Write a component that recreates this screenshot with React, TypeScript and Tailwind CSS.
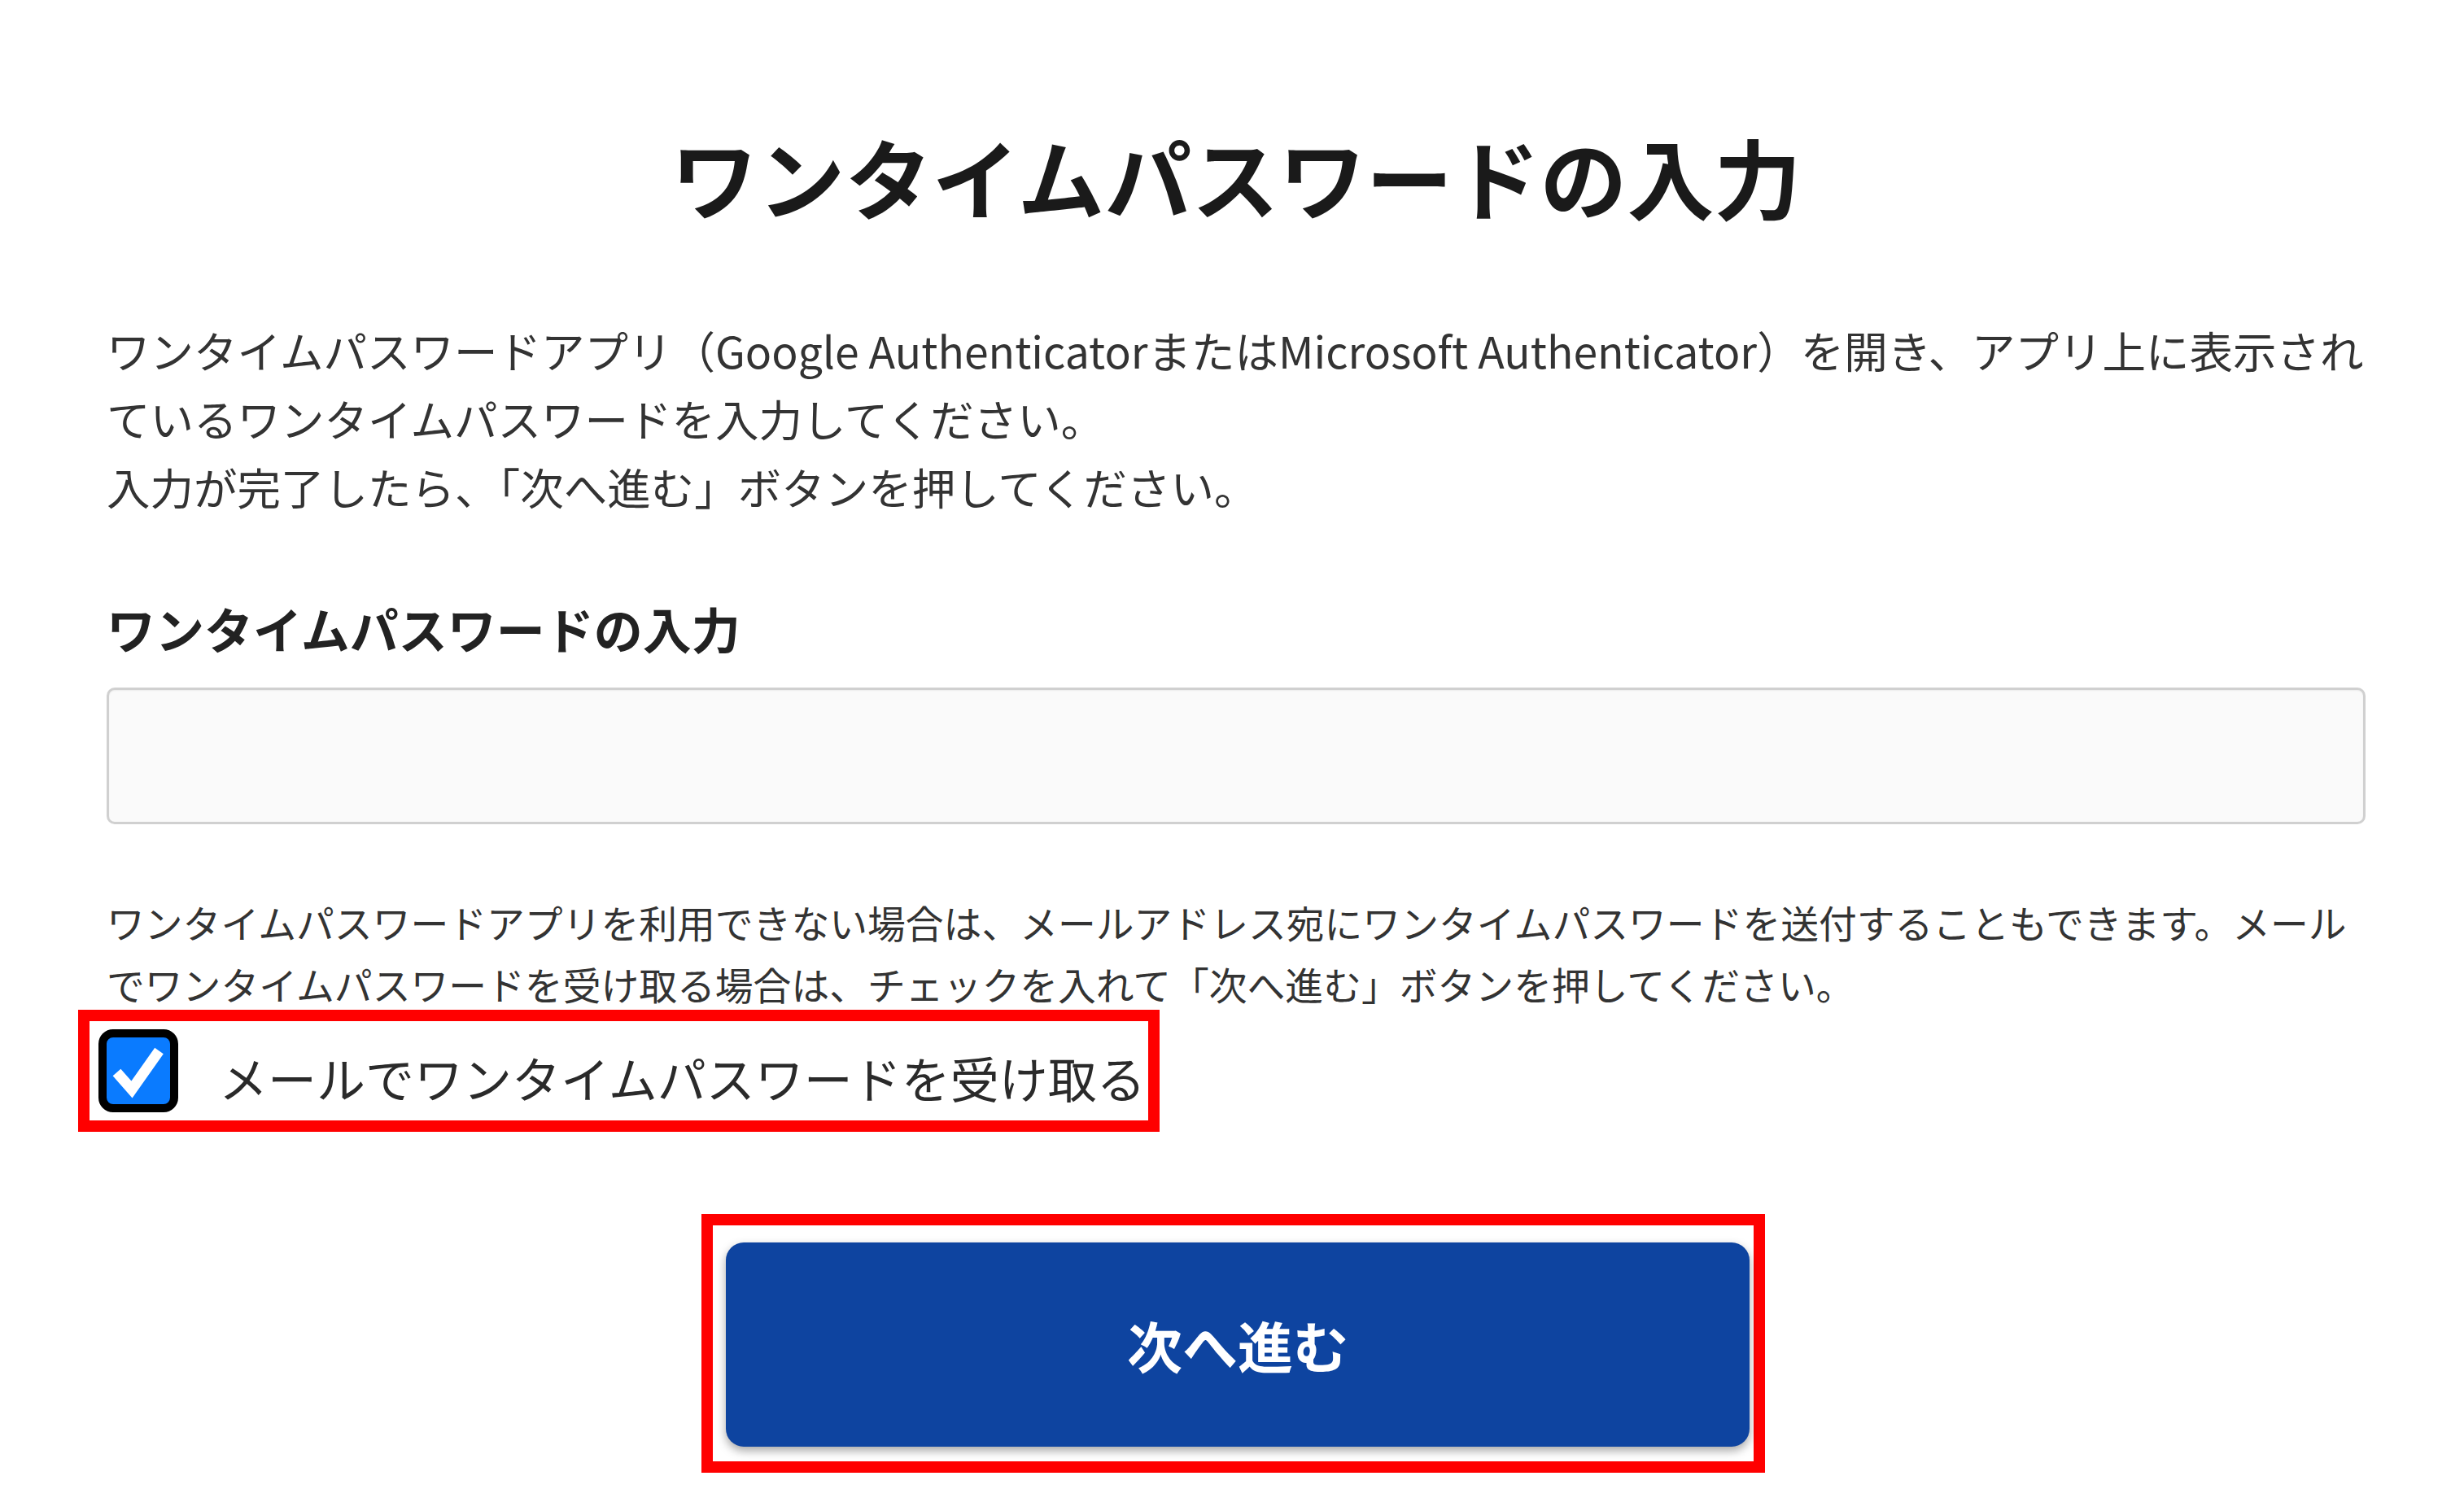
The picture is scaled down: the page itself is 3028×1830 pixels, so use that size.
import * as React from "react"

export default function App() {
  const [checked, setChecked] = React.useState(true)
  const [code, setCode] = React.useState("")

  return (
    <div className="min-h-[1830px] w-[3028px] bg-white font-['Noto_Sans_CJK_JP','Noto_Sans',sans-serif] text-[#333333]">
      <div className="ml-[131px] w-[2776px] pt-[163px]">
        <h1 className="text-center text-[107px] leading-[106px] font-bold text-[#1a1a1a]">
          ワンタイムパスワードの入力
        </h1>

        <p className="mt-[119px] text-[53.5px] leading-[84px] whitespace-nowrap">
          ワンタイムパスワードアプリ（Google AuthenticatorまたはMicrosoft Authenticator）を開き、アプリ上に表示され
          <br />
          ているワンタイムパスワードを入力してください。
          <br />
          入力が完了したら、「次へ進む」ボタンを押してください。
        </p>

        <h2 className="mt-[102px] text-[60px] leading-[60px] font-bold text-[#222222]">
          ワンタイムパスワードの入力
        </h2>
        <input
          value={code}
          onChange={(e) => setCode(e.target.value)}
          inputMode="numeric"
          className="mt-[43px] block h-[168px] w-full rounded-[10px] border-[3px] border-[#d0d0d0] bg-[#fafafa] px-8 text-[56px] shadow-[inset_0_1px_2px_rgba(0,0,0,0.06)] outline-none"
        />

        <p className="mt-[82px] text-[46.8px] leading-[76px] whitespace-nowrap">
          ワンタイムパスワードアプリを利用できない場合は、メールアドレス宛にワンタイムパスワードを送付することもできます。メール
          <br />
          でワンタイムパスワードを受け取る場合は、チェックを入れて「次へ進む」ボタンを押してください。
        </p>

        {/* highlighted checkbox row */}
        <label className="-mt-[6px] -ml-[35px] flex h-[150px] w-[1329px] cursor-pointer items-center border-[14px] border-[#ff0000] pl-[11px]">
          <input
            type="checkbox"
            className="sr-only"
            checked={checked}
            onChange={(e) => setChecked(e.target.checked)}
          />
          <span className="flex h-[102px] w-[98px] shrink-0 items-center justify-center rounded-[18px] border-[10px] border-black bg-[#0a7bff]">
            {checked && (
              <svg width="78" height="82" viewBox="0 0 78 82" fill="none">
                <polyline
                  points="12.5,43 31,64 64.5,16.5"
                  stroke="white"
                  strokeWidth="13"
                  strokeLinejoin="miter"
                />
              </svg>
            )}
          </span>
          <span className="mt-[16px] ml-[50px] text-[60px] leading-[60px] text-[#2a2a2a]">
            メールでワンタイムパスワードを受け取る
          </span>
        </label>

        {/* highlighted submit button */}
        <div className="mt-[101px] ml-[731px] w-[1307px] border-[14px] border-[#ff0000] pt-[21px] pr-[5px] pb-[18px] pl-[16px]">
          <button
            type="button"
            className="flex h-[251px] w-[1258px] items-center justify-center rounded-[22px] bg-[#0e44a0] text-[68px] font-bold text-white shadow-[0_5px_12px_rgba(0,0,0,0.35)]"
          >
            次へ進む
          </button>
        </div>
      </div>
    </div>
  )
}
